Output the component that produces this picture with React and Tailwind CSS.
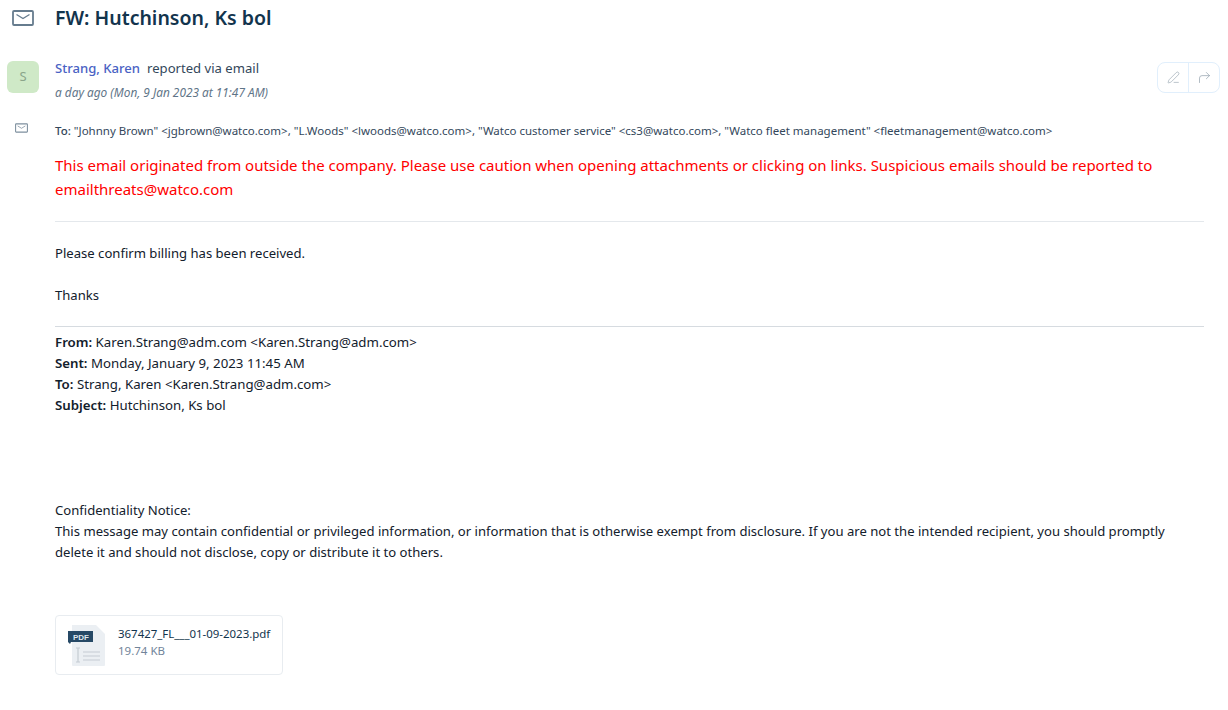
import { PenLine, CornerUpRight } from 'lucide-react';

function MailIcon({ className }) {
  return (
    <svg viewBox="0 0 22 16" fill="none" stroke="currentColor" className={className}>
      <rect x="1" y="1" width="20" height="14" rx="1" strokeWidth="1.8" />
      <path d="M4.5 4.5 L11 8.5 L17.5 4.5" strokeWidth="1.3" />
    </svg>
  );
}

function PdfIcon() {
  return (
    <svg width="38" height="44" viewBox="0 0 38 44" className="shrink-0">
      <path d="M4 2 H28 L37 11 V42 Q37 43 36 43 H5 Q4 43 4 42 Z" fill="#ebeff3" />
      <path d="M0 8 H25 V19 H3 L2 21 L0 19 Z" fill="#264966" />
      <text x="5" y="16.5" fontSize="8" fontWeight="700" fill="#dfe7ee" fontFamily="Liberation Sans, sans-serif">PDF</text>
      <path d="M10 25 V39 M8 25 H12 M8 39 H12" stroke="#c5ccd3" strokeWidth="1.2" fill="none" />
      <path d="M15 29 H32 M15 33 H32 M15 37 H32" stroke="#c5ccd3" strokeWidth="1.2" fill="none" />
    </svg>
  );
}

export default function App() {
  return (
    <div className="w-[1228px] h-[710px] overflow-hidden bg-white text-[#12344d] font-['Noto_Sans',sans-serif]">
      {/* Subject */}
      <div className="flex items-center h-[36px]">
        <div className="w-[55px] pl-[12px]">
          <MailIcon className="w-[22px] h-[16px] text-[#667c8e]" />
        </div>
        <h1 className="text-[19.5px] font-semibold leading-[36px]">FW: Hutchinson, Ks bol</h1>
      </div>

      {/* Sender */}
      <div className="flex mt-[14px]">
        <div className="w-[55px] pl-[7px] pt-[11px]">
          <div className="w-[32px] h-[32px] rounded-[6px] bg-[#cfe9c7] text-[#8aa58a] text-[13px] flex items-center justify-center">S</div>
        </div>
        <div className="flex-1">
          <div className="flex items-center h-[36px] text-[13.1px] pt-[2px]">
            <span className="text-[#4a62c4] font-medium">Strang, Karen</span>
            <span className="ml-[7px] text-[#33475b]">reported via email</span>
          </div>
          <div className="text-[11.85px] italic text-[#5f7588] leading-[16px] -mt-[2px]">a day ago (Mon, 9 Jan 2023 at 11:47 AM)</div>
        </div>
        <div className="pr-[8px] pt-[12px]">
          <div className="flex w-[63px] h-[31px] border border-[#e1effc] rounded-[8px]">
            <div className="flex-1 flex items-center justify-center border-r border-[#e1effc]">
              <PenLine size={13} className="text-[#98a5b0]" strokeWidth={1.2} />
            </div>
            <div className="flex-1 flex items-center justify-center">
              <CornerUpRight size={15} className="text-[#98a5b0]" strokeWidth={1.2} />
            </div>
          </div>
        </div>
      </div>

      {/* Recipients */}
      <div className="flex mt-[21px] h-[20px]">
        <div className="w-[55px] pl-[15px] pt-[2px]">
          <MailIcon className="w-[13px] h-[10px] text-[#7d8f9e]" />
        </div>
        <div className="text-[11.5px] leading-[20px] text-[#33475b] whitespace-nowrap">
          <span className="font-medium">To:</span> "Johnny Brown" &lt;jgbrown@watco.com&gt;, "L.Woods" &lt;lwoods@watco.com&gt;, "Watco customer service" &lt;cs3@watco.com&gt;, "Watco fleet management" &lt;fleetmanagement@watco.com&gt;
        </div>
      </div>

      {/* Body */}
      <div className="ml-[55px] w-[1149px] mt-[12px] text-[13.1px] text-[#12202c]">
        <p className="text-[15px] leading-[24px] text-[#ff0000]">
          This email originated from outside the company. Please use caution when opening attachments or clicking on links. Suspicious emails should be reported to emailthreats@watco.com
        </p>
        <hr className="mt-[20px] border-[#e4e8ec]" />
        <p className="mt-[21px] leading-[21px]">Please confirm billing has been received.</p>
        <p className="mt-[21px] leading-[21px]">Thanks</p>
        <hr className="mt-[20px] border-[#d6dbe0]" />
        <div className="mt-[5px] leading-[21px] text-[13.25px]">
          <div><b className="font-semibold">From:</b> Karen.Strang@adm.com &lt;Karen.Strang@adm.com&gt;</div>
          <div><b className="font-semibold">Sent:</b> Monday, January 9, 2023 11:45 AM</div>
          <div><b className="font-semibold">To:</b> Strang, Karen &lt;Karen.Strang@adm.com&gt;</div>
          <div><b className="font-semibold">Subject:</b> Hutchinson, Ks bol</div>
        </div>
        <div className="mt-[84px] leading-[21px]">
          <div>Confidentiality Notice:</div>
          <div>This message may contain confidential or privileged information, or information that is otherwise exempt from disclosure. If you are not the intended recipient, you should promptly delete it and should not disclose, copy or distribute it to others.</div>
        </div>

        {/* Attachment */}
        <div className="mt-[52px] w-[228px] h-[60px] border border-[#e8ecf0] rounded-[4px] flex items-center pl-[12px] gap-[12px]">
          <PdfIcon />
          <div className="-mt-[6px]">
            <div className="text-[11.45px] leading-[17px] text-[#12344d]">367427_FL___01-09-2023.pdf</div>
            <div className="text-[11.5px] leading-[17px] text-[#71849a]">19.74 KB</div>
          </div>
        </div>
      </div>
    </div>
  );
}
